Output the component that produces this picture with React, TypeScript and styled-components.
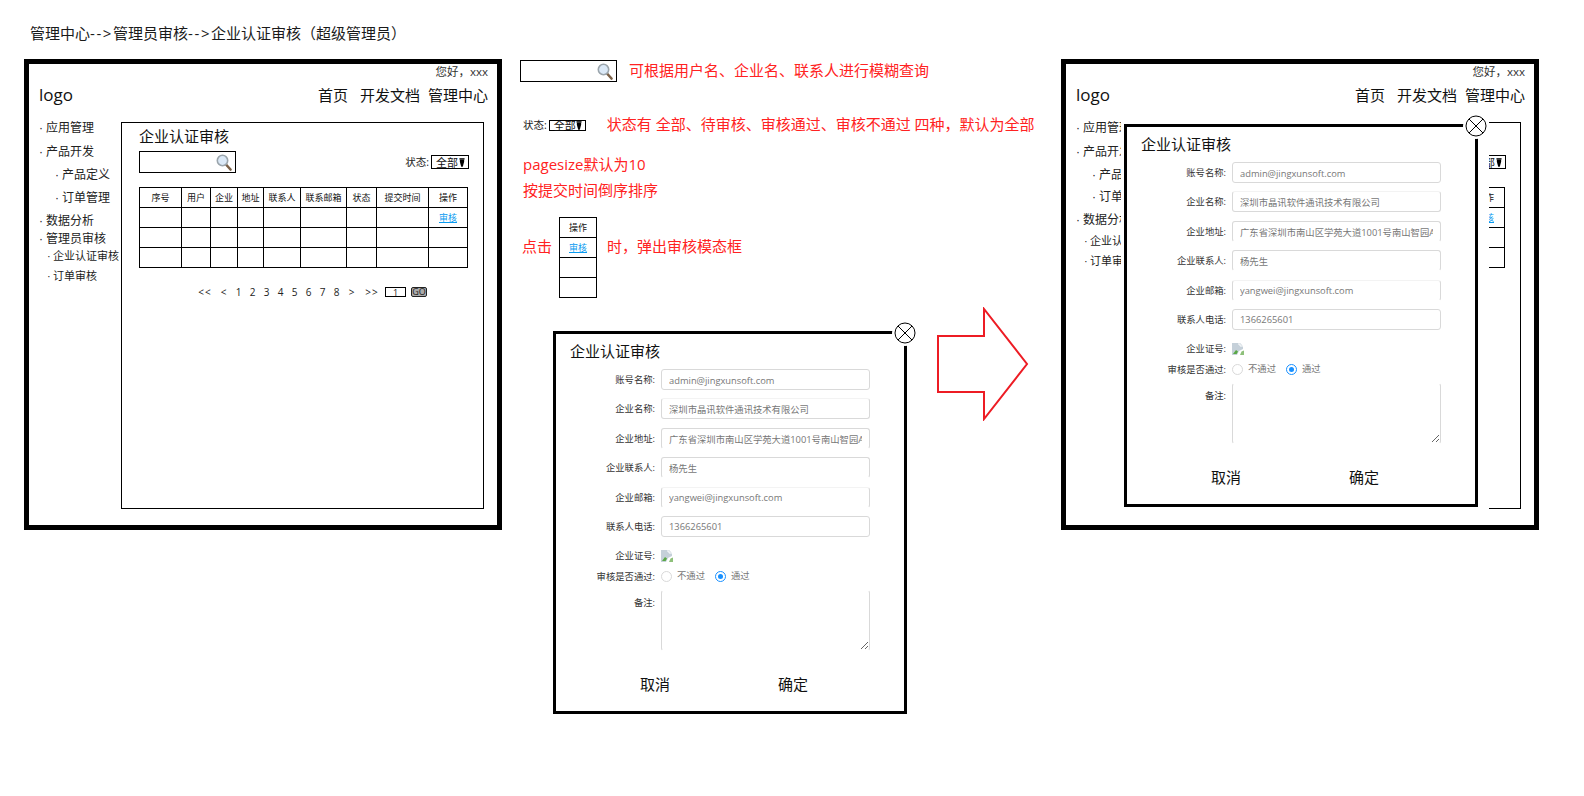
import React from "react";
import styled, { createGlobalStyle } from "styled-components";

const FONT = '"Open Sans", "Noto Sans CJK SC", sans-serif';

type MenuItem = { label: string; level: 0 | 1 | 2; gap: number };

const MENU_FULL: MenuItem[] = [
  { label: "应用管理", level: 0, gap: 0 },
  { label: "产品开发", level: 0, gap: 8 },
  { label: "产品定义", level: 1, gap: 7 },
  { label: "订单管理", level: 1, gap: 7 },
  { label: "数据分析", level: 0, gap: 7 },
  { label: "管理员审核", level: 0, gap: 2 },
  { label: "企业认证审核", level: 2, gap: 1 },
  { label: "订单审核", level: 2, gap: 4 },
];

const MENU_TRIMMED: MenuItem[] = [
  { label: "应用管理", level: 0, gap: 0 },
  { label: "产品开发", level: 0, gap: 8 },
  { label: "产品定义", level: 1, gap: 7 },
  { label: "订单管理", level: 1, gap: 6 },
  { label: "数据分析", level: 0, gap: 7 },
  { label: "企业认证审核", level: 2, gap: 5 },
  { label: "订单审核", level: 2, gap: 4 },
];

const COLUMNS = [
  { title: "序号", width: 42 },
  { title: "用户", width: 29 },
  { title: "企业", width: 27 },
  { title: "地址", width: 26 },
  { title: "联系人", width: 37 },
  { title: "联系邮箱", width: 46 },
  { title: "状态", width: 30 },
  { title: "提交时间", width: 52 },
  { title: "操作", width: 39 },
];

type Open = "none" | "top" | "bottom" | "both";

const FIELDS: { label: string; value: string; open: Open }[] = [
  { label: "账号名称:", value: "admin@jingxunsoft.com", open: "none" },
  { label: "企业名称:", value: "深圳市晶讯软件通讯技术有限公司", open: "top" },
  { label: "企业地址:", value: "广东省深圳市南山区学苑大道1001号南山智园A7栋", open: "bottom" },
  { label: "企业联系人:", value: "杨先生", open: "bottom" },
  { label: "企业邮箱:", value: "yangwei@jingxunsoft.com", open: "both" },
  { label: "联系人电话:", value: "1366265601", open: "none" },
];

const App = () => (
  <>
    <GlobalStyle />
    <Page>
      <PageTitle>
        管理中心<TitleArrow>--&gt;</TitleArrow>管理员审核<TitleArrow>--&gt;</TitleArrow>企业认证审核（超级管理员）
      </PageTitle>
      <Columns>
        <AdminFrame menu={MENU_FULL} />
        <NotesColumn>
          <NoteRow>
            <SearchBox />
            <Note>可根据用户名、企业名、联系人进行模糊查询</Note>
          </NoteRow>
          <StatusNoteRow>
            <StatusFilter $small />
            <Note>状态有 全部、待审核、审核通过、审核不通过 四种，默认为全部</Note>
          </StatusNoteRow>
          <PlainNote>pagesize默认为10</PlainNote>
          <SortNote>按提交时间倒序排序</SortNote>
          <ClickNoteRow>
            <ClickText>点击</ClickText>
            <MiniTable />
            <ClickText>时，弹出审核模态框</ClickText>
          </ClickNoteRow>
          <LowerRow>
            <ModalSlot>
              <ReviewModal />
            </ModalSlot>
            <NextArrow />
          </LowerRow>
        </NotesColumn>
        <AdminFrame menu={MENU_TRIMMED}>
          <ModalMask>
            <ReviewModal />
          </ModalMask>
        </AdminFrame>
      </Columns>
    </Page>
  </>
);

export default App;

function AdminFrame({ menu, children }: { menu: MenuItem[]; children?: React.ReactNode }) {
  return (
    <Frame>
      <Greeting>您好，xxx</Greeting>
      <Header>
        <Logo>logo</Logo>
        <Nav>
          <NavLink>首页</NavLink>
          <NavLink $gap={12}>开发文档</NavLink>
          <NavLink $gap={8}>管理中心</NavLink>
        </Nav>
      </Header>
      <Body>
        <Sidebar>
          {menu.map((item) => (
            <MenuRow key={item.label} $level={item.level} $gap={item.gap}>
              <Bullet $level={item.level}>·</Bullet>
              {item.label}
            </MenuRow>
          ))}
        </Sidebar>
        <Panel>
          <PanelTitle>企业认证审核</PanelTitle>
          <Toolbar>
            <SearchBox />
            <StatusFilter />
          </Toolbar>
          <ReviewTable />
          <Pager>
            <PageItem>&lt;&lt;</PageItem>
            <PageItem $gap={5}>&lt;</PageItem>
            {[1, 2, 3, 4, 5, 6, 7, 8].map((n, i) => (
              <PageItem key={n} $gap={i === 0 ? 1 : 0}>
                {n}
              </PageItem>
            ))}
            <PageItem $gap={1}>&gt;</PageItem>
            <PageItem $gap={6}>&gt;&gt;</PageItem>
            <PageInput>1</PageInput>
            <GoButton>GO</GoButton>
          </Pager>
        </Panel>
      </Body>
      {children}
    </Frame>
  );
}

function SearchBox() {
  return (
    <SearchField>
      <svg width="16" height="17" viewBox="0 0 16 17">
        <line x1="10" y1="10.5" x2="14.5" y2="15.5" stroke="#7b6148" strokeWidth="2.6" strokeLinecap="round" />
        <circle cx="6.5" cy="6.5" r="5.2" fill="#dbe9f7" stroke="#9ba5ac" strokeWidth="1.6" />
      </svg>
    </SearchField>
  );
}

function StatusFilter({ $small }: { $small?: boolean }) {
  return (
    <StatusGroup $small={$small}>
      <StatusLabel>状态:</StatusLabel>
      <StatusSelect $small={$small}>
        <StatusValue>全部</StatusValue>
        <svg width="6" height="9" viewBox="0 0 7 10">
          <rect x="0.5" y="0" width="6" height="1.5" fill="#000" />
          <polygon points="1,1.5 6,1.5 6,4 4.4,10 2.6,10 1,4" fill="#000" />
        </svg>
      </StatusSelect>
    </StatusGroup>
  );
}

function ReviewTable() {
  return (
    <GridTable $width={329}>
      <colgroup>
        {COLUMNS.map((c) => (
          <col key={c.title} width={c.width} />
        ))}
      </colgroup>
      <tbody>
        <tr>
          {COLUMNS.map((c) => (
            <GridCell key={c.title}>{c.title}</GridCell>
          ))}
        </tr>
        {[0, 1, 2].map((row) => (
          <tr key={row}>
            {COLUMNS.map((c, i) => (
              <GridCell key={c.title}>
                {row === 0 && i === COLUMNS.length - 1 ? <ReviewLink>审核</ReviewLink> : null}
              </GridCell>
            ))}
          </tr>
        ))}
      </tbody>
    </GridTable>
  );
}

function MiniTable() {
  return (
    <GridTable $width={38}>
      <tbody>
        <tr>
          <GridCell>操作</GridCell>
        </tr>
        <tr>
          <GridCell>
            <ReviewLink>审核</ReviewLink>
          </GridCell>
        </tr>
        <tr>
          <GridCell />
        </tr>
        <tr>
          <GridCell />
        </tr>
      </tbody>
    </GridTable>
  );
}

function ReviewModal() {
  return (
    <Modal>
      <CloseButton aria-label="关闭">
        <svg width="22" height="22" viewBox="0 0 22 22">
          <circle cx="11" cy="11" r="10" fill="#fff" stroke="#000" strokeWidth="1" />
          <line x1="4" y1="4" x2="18" y2="18" stroke="#000" strokeWidth="1" />
          <line x1="18" y1="4" x2="4" y2="18" stroke="#000" strokeWidth="1" />
        </svg>
      </CloseButton>
      <ModalTitle>企业认证审核</ModalTitle>
      <FieldList>
        {FIELDS.map((f) => (
          <FieldRow key={f.label}>
            <FieldLabel>{f.label}</FieldLabel>
            <FieldInput readOnly value={f.value} $open={f.open} />
          </FieldRow>
        ))}
      </FieldList>
      <LicenseRow>
        <FieldLabel>企业证号:</FieldLabel>
        <svg width="12" height="12" viewBox="0 0 12 12">
          <path d="M0 0H8L11 3V6L7 8L5 12H0Z" fill="#c5d0d9" />
          <path d="M1 11L4 7L6 8.5L4.6 11Z" fill="#5aa845" />
          <path d="M8 12L9.5 8.5L12 7.5V12Z" fill="#8ec07a" />
          <path d="M6 1H8V3H11" fill="none" stroke="#fff" strokeWidth="1" />
        </svg>
      </LicenseRow>
      <RadioRow>
        <FieldLabel>审核是否通过:</FieldLabel>
        <RadioGroup>
          <RadioDot />
          <RadioText>不通过</RadioText>
          <RadioDot $checked />
          <RadioText>通过</RadioText>
        </RadioGroup>
      </RadioRow>
      <RemarkRow>
        <RemarkLabel>备注:</RemarkLabel>
        <RemarkInput readOnly />
      </RemarkRow>
      <ModalActions>
        <ActionButton>取消</ActionButton>
        <ActionButton>确定</ActionButton>
      </ModalActions>
    </Modal>
  );
}

function NextArrow() {
  return (
    <ArrowMark width="92" height="114" viewBox="0 0 92 114">
      <polygon
        points="1,29 47,29 47,2 90,57 47,112 47,85 1,85"
        fill="none"
        stroke="#ed1c24"
        strokeWidth="2"
      />
    </ArrowMark>
  );
}

const GlobalStyle = createGlobalStyle`
  html, body {
    margin: 0;
    padding: 0;
    background: #fff;
  }

  body {
    font-family: ${FONT};
    color: #111;
  }
`;

const Page = styled.div`
  width: 1584px;
  height: 796px;
  padding: 22px 0 0 24px;
  box-sizing: border-box;
  overflow: hidden;
`;

const PageTitle = styled.div`
  margin-left: 6px;
  font-size: 15px;
  line-height: 22px;
  color: #1a1a1a;
`;

const TitleArrow = styled.span`
  letter-spacing: 1.6px;
`;

const Columns = styled.div`
  display: flex;
  align-items: flex-start;
  margin-top: 15px;
`;

const Frame = styled.div`
  position: relative;
  flex: none;
  width: 478px;
  height: 471px;
  border: 5px solid #000;
  box-sizing: border-box;
  background: #fff;
`;

const Greeting = styled.div`
  padding-right: 9px;
  text-align: right;
  font-size: 11.5px;
  line-height: 16px;
  color: #333;
`;

const Header = styled.div`
  display: flex;
  justify-content: space-between;
  align-items: center;
  height: 30px;
  padding: 0 9px 0 10px;
`;

const Logo = styled.div`
  font-size: 17px;
  line-height: 24px;
`;

const Nav = styled.div`
  display: flex;
`;

const NavLink = styled.span<{ $gap?: number }>`
  margin-left: ${({ $gap }) => $gap ?? 0}px;
  font-size: 15px;
  line-height: 22px;
`;

const Body = styled.div`
  display: flex;
  align-items: flex-start;
  margin-top: 9px;
`;

const Sidebar = styled.div`
  flex: none;
  width: 92px;
  margin-top: 1px;
`;

const MenuRow = styled.div<{ $level: number; $gap: number }>`
  display: flex;
  margin-top: ${({ $gap }) => $gap}px;
  padding-left: ${({ $level }) => ($level === 1 ? 26 : $level === 2 ? 18 : 10)}px;
  font-size: ${({ $level }) => ($level === 2 ? 11 : 12)}px;
  line-height: 16px;
  white-space: nowrap;
  color: #222;
`;

const Bullet = styled.span<{ $level: number }>`
  flex: none;
  width: ${({ $level }) => ($level === 2 ? 6 : 7)}px;
  font-family: "Liberation Sans", sans-serif;
`;

const Panel = styled.div`
  flex: none;
  width: 363px;
  height: 387px;
  margin-top: 3px;
  padding: 3px 14px 0 17px;
  border: 1px solid #000;
  box-sizing: border-box;
`;

const PanelTitle = styled.div`
  font-size: 15px;
  line-height: 20px;
`;

const Toolbar = styled.div`
  display: flex;
  justify-content: space-between;
  align-items: center;
  margin-top: 5px;
`;

const SearchField = styled.div`
  display: flex;
  justify-content: flex-end;
  align-items: center;
  flex: none;
  width: 97px;
  height: 22px;
  padding-right: 3px;
  border: 1px solid #000;
  box-sizing: border-box;
`;

const StatusGroup = styled.div<{ $small?: boolean }>`
  display: flex;
  align-items: center;
  flex: none;
  gap: 2px;
  margin-left: ${({ $small }) => ($small ? 3 : 0)}px;
`;

const StatusLabel = styled.span`
  font-size: 10.5px;
  line-height: 14px;
  white-space: nowrap;
  color: #222;
`;

const StatusSelect = styled.div<{ $small?: boolean }>`
  display: flex;
  justify-content: space-between;
  align-items: center;
  flex: none;
  width: ${({ $small }) => ($small ? 37 : 38)}px;
  height: ${({ $small }) => ($small ? 11 : 14)}px;
  padding: 0 3px 0 4px;
  border: 1px solid #000;
  box-sizing: border-box;
`;

const StatusValue = styled.span`
  position: relative;
  top: 1px;
  font-size: 11px;
  line-height: 12px;
  white-space: nowrap;
`;

const GridTable = styled.table<{ $width: number }>`
  flex: none;
  width: ${({ $width }) => $width}px;
  margin: 14px 0 0;
  border-collapse: collapse;
  table-layout: fixed;
`;

const GridCell = styled.td`
  height: 19px;
  padding: 0;
  border: 1px solid #000;
  text-align: center;
  font-size: 9px;
  line-height: 12px;
  white-space: nowrap;
  color: #111;
`;

const ReviewLink = styled.span`
  color: #0a9bf0;
  text-decoration: underline;
`;

const Pager = styled.div`
  display: flex;
  align-items: center;
  height: 10px;
  margin: 19px 0 0 59px;
  font-size: 10px;
  line-height: 10px;
  color: #222;
`;

const PageItem = styled.span<{ $gap?: number }>`
  flex: none;
  width: 14px;
  margin-left: ${({ $gap }) => $gap ?? 0}px;
  text-align: center;
  white-space: nowrap;
  letter-spacing: 1px;
`;

const PageInput = styled.span`
  flex: none;
  width: 21px;
  height: 10px;
  margin-left: 6px;
  border: 1px solid #000;
  box-sizing: border-box;
  text-align: center;
  font-size: 9px;
  line-height: 9px;
`;

const GoButton = styled.span`
  flex: none;
  width: 16px;
  height: 10px;
  margin-left: 5px;
  border: 1px solid #222;
  border-radius: 2px;
  box-sizing: border-box;
  background: #aaa;
  text-align: center;
  font-size: 9px;
  line-height: 8px;
`;

const NotesColumn = styled.div`
  flex: none;
  width: 541px;
  margin-left: 18px;
  padding-top: 1px;
  box-sizing: border-box;
`;

const NoteRow = styled.div`
  display: flex;
  align-items: center;
  gap: 12px;
`;

const StatusNoteRow = styled.div`
  display: flex;
  align-items: center;
  gap: 21px;
  height: 14px;
  margin-top: 36px;
`;

const Note = styled.span`
  position: relative;
  top: -1px;
  font-size: 15px;
  line-height: 22px;
  white-space: nowrap;
  color: #f22;
`;

const PlainNote = styled(Note)`
  display: block;
  margin: 22px 0 0 3px;
`;

const SortNote = styled(PlainNote)`
  margin-top: 4px;
`;

const ClickNoteRow = styled.div`
  display: flex;
  align-items: flex-start;
  margin: 1px 0 0 2px;

  ${GridTable} {
    margin: 14px 10px 0 7px;
  }
`;

const ClickText = styled(Note)`
  margin-top: 33px;
`;

const LowerRow = styled.div`
  display: flex;
  align-items: flex-start;
  margin: 9px 0 0 33px;
`;

const ModalSlot = styled.div`
  flex: none;
  margin-top: 24px;
`;

const ArrowMark = styled.svg`
  flex: none;
  margin-left: 30px;
`;

const ModalMask = styled.div`
  position: absolute;
  top: 51px;
  left: 55px;
  width: 368px;
  height: 397px;
  padding: 9px 0 0 3px;
  box-sizing: border-box;
  background: #fff;
`;

const Modal = styled.div`
  position: relative;
  width: 354px;
  height: 383px;
  padding: 7px 0 0 14px;
  border: 3px solid #000;
  box-sizing: border-box;
  background: #fff;
`;

const CloseButton = styled.div`
  position: absolute;
  top: -14px;
  left: 336px;
  display: flex;
  justify-content: center;
  align-items: center;
  width: 26px;
  height: 26px;
  border-radius: 50%;
  background: #fff;
`;

const ModalTitle = styled.div`
  font-size: 15px;
  line-height: 20px;
`;

const FieldList = styled.div`
  display: flex;
  flex-direction: column;
  gap: 8.4px;
  margin-top: 8px;
`;

const FieldRow = styled.div`
  display: grid;
  grid-template-columns: 85px 209px;
  column-gap: 6px;
  align-items: center;
  height: 21px;
`;

const FieldLabel = styled.span`
  padding-top: 1px;
  text-align: right;
  font-size: 9.33px;
  line-height: 14px;
  white-space: nowrap;
  color: #333;
`;

const FieldInput = styled.input<{ $open: Open }>`
  width: 209px;
  height: 21px;
  padding: 1px 7px 0;
  border: 1px solid #d9d9d9;
  border-top-color: ${({ $open }) => ($open === "top" || $open === "both" ? "#f3f3f3" : "#d9d9d9")};
  border-bottom-color: ${({ $open }) => ($open === "bottom" || $open === "both" ? "transparent" : "#d9d9d9")};
  border-radius: 3px;
  outline: none;
  box-sizing: border-box;
  font-family: ${FONT};
  font-size: 9.33px;
  color: #777;
`;

const LicenseRow = styled(FieldRow)`
  height: 16px;
  margin-top: 11px;
`;

const RadioRow = styled(FieldRow)`
  height: 14px;
  margin-top: 5px;
`;

const RadioGroup = styled.div`
  display: flex;
  align-items: center;
`;

const RadioDot = styled.span<{ $checked?: boolean }>`
  position: relative;
  flex: none;
  width: 11px;
  height: 11px;
  border: 1px solid ${({ $checked }) => ($checked ? "#1890ff" : "#d9d9d9")};
  border-radius: 50%;
  box-sizing: border-box;

  &::after {
    content: "";
    display: ${({ $checked }) => ($checked ? "block" : "none")};
    position: absolute;
    inset: 2px;
    border-radius: 50%;
    background: #1890ff;
  }
`;

const RadioText = styled.span`
  margin: 0 10px 0 5px;
  font-size: 9.33px;
  line-height: 14px;
  color: #777;
`;

const RemarkRow = styled(FieldRow)`
  align-items: start;
  height: 61px;
  margin-top: 7px;
`;

const RemarkLabel = styled(FieldLabel)`
  margin-top: 5px;
`;

const RemarkInput = styled.textarea`
  display: block;
  width: 209px;
  height: 61px;
  margin: 0;
  padding: 0;
  border: 1px solid #d9d9d9;
  border-top-color: transparent;
  border-bottom-color: transparent;
  border-radius: 3px;
  outline: none;
  box-sizing: border-box;
`;

const ModalActions = styled.div`
  display: flex;
  gap: 108px;
  margin: 23px 0 0 70px;
`;

const ActionButton = styled.span`
  font-size: 15px;
  line-height: 20px;
`;
